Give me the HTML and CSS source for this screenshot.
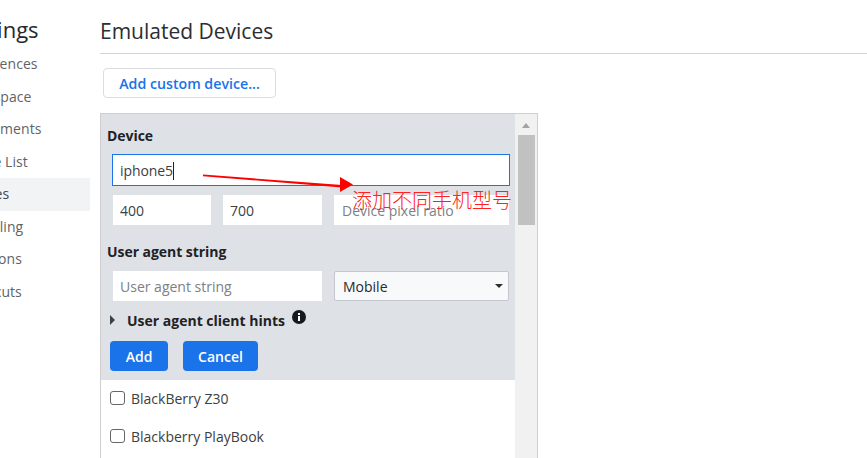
FILE: index.html
```html
<!DOCTYPE html>
<html lang="en">
<head>
<meta charset="utf-8">
<title>Emulated Devices</title>
<link rel="stylesheet" href="styles.css">
</head>
<body>
<div class="page">
  <aside class="sidebar">
    <div class="sidebar-inner">
      <h1 class="sidebar-title">Settings</h1>
      <nav class="tabs">
        <div class="tab">Preferences</div>
        <div class="tab">Workspace</div>
        <div class="tab">Experiments</div>
        <div class="tab">Ignore List</div>
        <div class="tab active">Devices</div>
        <div class="tab">Throttling</div>
        <div class="tab">Locations</div>
        <div class="tab">Shortcuts</div>
      </nav>
    </div>
  </aside>
  <main class="main">
    <h2 class="heading">Emulated Devices</h2>
    <button class="add-custom">Add custom device...</button>
    <div class="list">
      <div class="list-content">
        <form class="editor">
          <div class="label">Device</div>
          <div class="name-row"><div class="input focused">iphone5<span class="caret"></span></div></div>
          <div class="size-row">
            <div class="input w-size">400</div>
            <div class="input w-size2">700</div>
            <div class="input w-ratio placeholder">Device pixel ratio</div>
          </div>
          <div class="label label-ua">User agent string</div>
          <div class="ua-row">
            <div class="input w-ua placeholder">User agent string</div>
            <div class="select">Mobile<span class="select-arrow"></span></div>
          </div>
          <div class="hints">
            <span class="disclosure"></span>
            <span class="hints-text">User agent client hints</span>
            <svg class="info" viewBox="0 0 14 14" width="14" height="14"><circle cx="7" cy="7" r="7" fill="#16191d"/><rect x="6" y="6" width="2" height="5" fill="#fff"/><rect x="6" y="3" width="2" height="2" fill="#fff"/></svg>
          </div>
          <div class="buttons">
            <div class="btn btn-add">Add</div>
            <div class="btn btn-cancel">Cancel</div>
          </div>
        </form>
        <div class="device"><span class="check"></span>BlackBerry Z30</div>
        <div class="device"><span class="check"></span>Blackberry PlayBook</div>
      </div>
      <div class="scrollbar">
        <span class="scroll-up"></span>
        <div class="scroll-thumb"></div>
      </div>
    </div>
  </main>
</div>
<svg class="arrow" width="160" height="24" viewBox="0 0 160 24">
  <path d="M1 2.6 L140 13 L140 15.4 L1 4.2 Z" fill="#fe0000"/>
  <path d="M138 5 L151 12.5 L138 20 Z" fill="#fe0000"/>
</svg>
<div class="note">添加不同手机型号</div>
</body>
</html>
```
FILE: styles.css
```css
* { box-sizing: border-box; }
html, body { margin: 0; height: 100%; overflow: hidden; background: #fff; }
body { font-family: "Open Sans", "Noto Sans", "Liberation Sans", sans-serif; color: #1f2226; }
.page { display: flex; height: 458px; }

.sidebar { width: 100px; flex: none; overflow: hidden; }
.sidebar-inner { width: 190px; margin-left: -100px; }
.sidebar-title { margin: 0; padding: 14px 0 0 57px; height: 48px; font-size: 22px; font-weight: 400; line-height: 30px; color: #26292d; white-space: nowrap; }
.tabs { display: flex; flex-direction: column; }
.tab { height: 32.5px; line-height: 32.5px; font-size: 14px; color: #5f6368; white-space: nowrap; padding-left: 59px; letter-spacing: 0.05px; }
.tab.active { background: #f1f3f4; color: #43474c; }

.main { flex: 1; min-width: 0; }
.heading { margin: 0; height: 54px; padding-top: 16px; font-size: 21px; line-height: 30px; font-weight: 400; color: #2b2e32; border-bottom: 1px solid #d0d3d7; white-space: nowrap; }
.add-custom { display: block; margin: 14px 0 15px 3px; width: 173px; height: 30px; padding: 2px 0 0; background: #fff; border: 1px solid #dadce0; border-radius: 4px; color: #1a73e8; font: 600 14.2px/24px "Open Sans", sans-serif; }

.list { display: flex; width: 438px; height: 345px; border: 1px solid #cfcfcf; border-bottom: 0; }
.list-content { width: 414px; flex: none; }
.editor { background: #dee1e6; height: 266px; padding: 1px 0 0 0; }
.label { font-size: 14px; font-weight: 700; line-height: 20px; padding-left: 6px; margin-top: 11px; letter-spacing: -0.05px; }
.input { height: 30px; background: #fff; font-size: 14px; line-height: 31px; padding-left: 7px; color: #3c4043; white-space: nowrap; }
.placeholder { color: #7d8084; }
.name-row { margin: 8px 5px 0 11px; }
.focused { height: 32px; line-height: 31px; border: 1px solid #1a73e8; padding-left: 7px; letter-spacing: -0.1px; }
.caret { display: inline-block; width: 1px; height: 18px; background: #202124; vertical-align: -4px; }
.size-row { display: flex; margin: 9px 0 0 12px; }
.w-size { width: 98px; margin-right: 12px; }
.w-size2 { width: 99px; margin-right: 12px; }
.w-ratio { width: 175px; padding-left: 8px; }
.label-ua { margin-top: 17px; }
.ua-row { display: flex; margin: 9px 0 0 12px; }
.w-ua { width: 209px; margin-right: 12px; }
.select { position: relative; width: 175px; height: 30px; background: #f8f9fa; border: 1px solid #c4c7cb; border-radius: 2px; font-size: 14px; line-height: 29px; padding-left: 8px; color: #26292d; }
.select-arrow { position: absolute; right: 5px; top: 12px; border: 4px solid transparent; border-top-color: #2b2e32; border-bottom: 0; }
.hints { display: flex; align-items: center; height: 20px; margin-top: 9px; padding-left: 9px; }
.disclosure { width: 0; height: 0; border: 5px solid transparent; border-left: 5px solid #3c4043; border-right: 0; margin-right: 12px; }
.hints-text { font-size: 14px; font-weight: 700; }
.info { margin: -6px 0 0 7px; }
.buttons { display: flex; margin: 11px 0 0 9px; }
.btn { height: 30px; background: #1a73e8; color: #fff; border-radius: 4px; font-size: 14px; font-weight: 600; line-height: 31px; text-align: center; }
.btn-add { width: 58px; margin-right: 15px; }
.btn-cancel { width: 75px; }
.device { display: flex; align-items: center; height: 38px; font-size: 14px; color: #3c4043; padding: 0 0 2px 9px; }
.check { width: 15px; height: 14px; border: 1.5px solid #666; border-radius: 3px; background: #fff; margin-right: 6px; }
.scrollbar { flex: 1; background: #f1f1f1; position: relative; padding-top: 21px; padding-left: 3px; }
.scroll-up { position: absolute; left: 7px; top: 9px; border: 4.5px solid transparent; border-bottom: 5px solid #a3a3a3; border-top: 0; }
.scroll-thumb { width: 17px; height: 90px; background: #c1c1c1; }

.arrow { position: absolute; left: 202px; top: 172px; }
.note { position: absolute; left: 352px; top: 187px; font-family: "Noto Sans CJK SC", sans-serif; font-size: 20px; line-height: 26px; color: #ff2020; font-weight: 300; white-space: nowrap; }
```
